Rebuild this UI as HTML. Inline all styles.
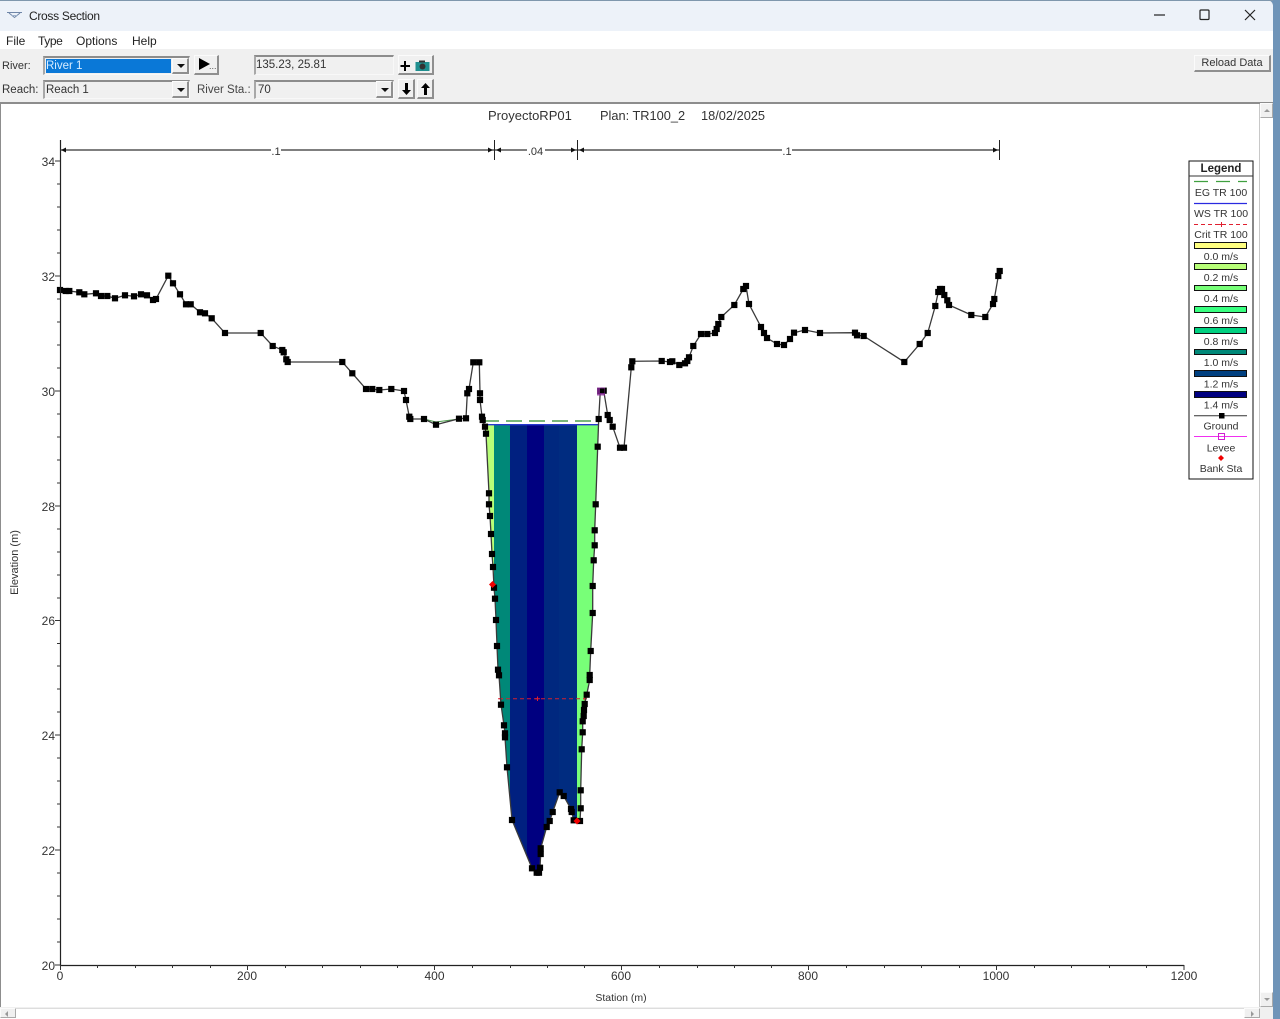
<!DOCTYPE html>
<html><head><meta charset="utf-8"><title>Cross Section</title>
<style>
html,body{margin:0;padding:0;background:#fff}
body{width:1280px;height:1019px;position:relative;overflow:hidden;font-family:"Liberation Sans",sans-serif;font-size:12px;color:#222}
.a{position:absolute;white-space:nowrap}
.box{position:absolute;box-sizing:border-box;border-top:2px solid #8c8c8c;border-left:2px solid #a8a8a8;border-right:1px solid #f8f8f8;border-bottom:1px solid #f8f8f8;background:#f0f0f0;line-height:17px;padding-left:1px;color:#333;font-size:11.5px}
.btn{position:absolute;box-sizing:border-box;background:#f0f0f0;border-top:1px solid #fbfbfb;border-left:1px solid #fbfbfb;border-right:2px solid #8f8f8f;border-bottom:2px solid #8f8f8f}
.tri{position:absolute;width:0;height:0;border-left:4px solid transparent;border-right:4px solid transparent;border-top:4px solid #111}
</style></head><body>
<div class="a" style="left:0;top:0;width:1280px;height:1019px;background:#6f94b8"></div>
<div class="a" style="left:0;top:0;width:1273px;height:1019px;background:#f0f0f0;border-radius:0 6px 6px 0"></div>
<div class="a" style="left:0;top:0;width:1273px;height:1px;background:#7f97ad"></div>
<div class="a" style="left:0;top:1px;width:1273px;height:30px;background:#edf2f9;border-radius:0 6px 0 0"></div>
<svg class="a" style="left:6px;top:10px" width="18" height="10"><path d="M1 2.500H16" stroke="#6f86a8" stroke-width="1"/><path d="M3 3L8.500 7.500L14 3" fill="none" stroke="#6f86a8" stroke-width="1"/><path d="M5 5.500H12" stroke="#9fb2cc"/></svg>
<div class="a" style="left:29px;top:9px;font-size:12px;letter-spacing:-.3px;color:#222">Cross Section</div>
<svg class="a" style="left:1150px;top:5px" width="112" height="20" fill="none" stroke="#222" stroke-width="1.200"><path d="M4 10H15"/><rect x="50" y="5" width="9" height="9.500" rx="1"/><path d="M95 5L105 15M105 5L95 15"/></svg>
<div class="a" style="left:0;top:31px;width:1273px;height:18px;background:#fff"></div>
<div class="a" style="left:6px;top:34px;color:#222">File</div>
<div class="a" style="left:38px;top:34px;color:#222;letter-spacing:-.4px">Type</div>
<div class="a" style="left:76px;top:34px;color:#222">Options</div>
<div class="a" style="left:132px;top:34px;color:#222">Help</div>

<div class="a" style="left:2px;top:60px;color:#333;font-size:11px">River:</div>
<div class="a" style="left:2px;top:84px;color:#333;font-size:11.500px">Reach:</div>
<div class="box" style="left:43px;top:56px;width:147px;height:19px"></div>
<div class="a" style="left:46px;top:59px;width:125px;height:14px;background:#0a78d7;color:#d8ecff;line-height:14px;font-size:11.500px">River 1</div>
<div class="btn" style="left:172px;top:58px;width:17px;height:16px"><div class="tri" style="left:4px;top:5px"></div></div>
<div class="box" style="left:43px;top:80px;width:147px;height:19px">Reach 1</div>
<div class="btn" style="left:172px;top:81px;width:17px;height:17px"><div class="tri" style="left:4px;top:6px"></div></div>
<div class="btn" style="left:194px;top:55px;width:25px;height:20px"><div class="a" style="left:4px;top:2px;width:0;height:0;border-left:11px solid #000;border-top:6px solid transparent;border-bottom:6px solid transparent"></div><div class="a" style="left:14px;top:5px;font-size:9px;color:#555">...</div></div>
<div class="box" style="left:254px;top:55px;width:140px;height:20px;line-height:17px;padding-left:0">135.23, 25.81</div>
<div class="a" style="left:197px;top:84px;color:#444;font-size:11.500px">River Sta.:</div>
<div class="box" style="left:254px;top:80px;width:140px;height:19px;padding-left:2px">70</div>
<div class="btn" style="left:376px;top:81px;width:17px;height:17px"><div class="tri" style="left:4px;top:6px"></div></div>
<div class="btn" style="left:398px;top:55px;width:36px;height:20px"><svg class="a" style="left:0;top:0" width="34" height="18"><path d="M6 5V15M1.500 10H11" stroke="#000" stroke-width="2"/><rect x="16.500" y="6" width="14" height="9" fill="#1f8f8f"/><rect x="20" y="4.500" width="6" height="2" fill="#333"/><circle cx="23.500" cy="10.500" r="3" fill="#333"/></svg></div>
<div class="btn" style="left:398px;top:79px;width:17px;height:20px"><svg class="a" style="left:0;top:0" width="15" height="18"><path d="M7.500 3V10" stroke="#000" stroke-width="3"/><path d="M3 10H12L7.500 15Z" fill="#000"/></svg></div>
<div class="btn" style="left:417px;top:79px;width:17px;height:20px"><svg class="a" style="left:0;top:0" width="15" height="18"><path d="M7.500 8V15" stroke="#000" stroke-width="3"/><path d="M3 8H12L7.500 3Z" fill="#000"/></svg></div>
<div class="btn" style="left:1194px;top:55px;width:77px;height:17px;text-align:center;line-height:14px;font-size:11px;color:#333">Reload Data</div>

<div class="a" style="left:0;top:102px;width:1260px;height:905px;background:#fff"></div>
<div class="a" style="left:0;top:102px;width:1273px;height:2px;background:#8d8d8d"></div>
<div class="a" style="left:0;top:102px;width:1px;height:905px;background:#8d8d8d"></div>
<div class="a" style="left:1259px;top:104px;width:1px;height:903px;background:#c8c8c8"></div>
<div class="a" style="left:1260px;top:104px;width:13px;height:903px;background:#fff"></div>
<div class="btn" style="left:1260px;top:103px;width:13px;height:15px;border-width:1px;border-right-color:#aaa;border-bottom-color:#aaa"><div class="a" style="left:3px;top:5px;border-left:3px solid transparent;border-right:3px solid transparent;border-bottom:3px solid #999"></div></div>
<div class="btn" style="left:1260px;top:992px;width:13px;height:15px;border-width:1px;border-right-color:#aaa;border-bottom-color:#aaa"><div class="a" style="left:3px;top:5px;border-left:3px solid transparent;border-right:3px solid transparent;border-top:3px solid #999"></div></div>
<div class="a" style="left:0;top:1007px;width:1273px;height:12px;background:#f0f0f0"></div>
<div class="a" style="left:0;top:1008px;width:1260px;height:10px;background:#fff;border-top:1px solid #ddd"></div>
<div class="btn" style="left:0;top:1008px;width:16px;height:10px;border-width:1px;border-right-color:#aaa;border-bottom-color:#aaa"><div class="a" style="left:4px;top:2px;border-top:3px solid transparent;border-bottom:3px solid transparent;border-right:3px solid #999"></div></div>
<div class="btn" style="left:1244px;top:1008px;width:16px;height:10px;border-width:1px;border-right-color:#aaa;border-bottom-color:#aaa"><div class="a" style="left:6px;top:2px;border-top:3px solid transparent;border-bottom:3px solid transparent;border-left:3px solid #999"></div></div>

<svg class="a" style="left:0;top:0" width="1280" height="1019" font-family="'Liberation Sans',sans-serif" font-size="12" fill="#333">
<defs>
<marker id="m" markerUnits="userSpaceOnUse" markerWidth="7" markerHeight="7" refX="3.500" refY="3.500"><rect width="6.200" height="6.200" x=".4" y=".4" fill="#000"/></marker>
<clipPath id="w"><path d="M484 424.700L486 433.700L489 493.300L489 504.300L490 516L491 534L492 554L493 567L494 587.700L495 598.700L496 620L497 646L498 669.700L499 675.300L501 704.700L504 725.300L505 737.300L507 767.300L512 820L532 868.300L536.700 872.700L539 872.700L540 867.700L540.700 848.300L546.700 827L549.700 821L552.700 812L559.700 792.300L563.700 796L571 809L573.700 820.300L580 821L580.700 790.300L581.700 749.300L582.700 721.300L584.700 704L586.700 694.700L589.700 675L590.700 651L592.700 613L592.700 586L593.700 560.300L594.700 530.300L595.700 504.300L597.700 446.700L598.700 424.700Z"/></clipPath>
</defs>
<g clip-path="url(#w)" shape-rendering="crispEdges">
<rect x="480" y="424" width="14" height="460" fill="#b8ff78"/>
<rect x="494" y="424" width="16" height="460" fill="#008878"/>
<rect x="510" y="424" width="17" height="460" fill="#002080"/>
<rect x="527" y="424" width="17" height="460" fill="#000080"/>
<rect x="544" y="424" width="15" height="460" fill="#00287f"/>
<rect x="559" y="424" width="18" height="460" fill="#002c80"/>
<rect x="577" y="424" width="24" height="460" fill="#78ff78"/>
</g>
<path d="M424 419L436 422L459 419" fill="none" stroke="#4f9f4f" stroke-width="1"/>
<path d="M483 421H598" stroke="#4f9f4f" stroke-width="1.500" stroke-dasharray="16 7" fill="none"/>
<path d="M485 424.700H598" stroke="#2838d0" stroke-width="1.300" fill="none"/>
<path d="M499 698.700H586" stroke="#d02030" stroke-width="1" stroke-dasharray="4 3" fill="none"/>
<path d="M500.500 696.500V701M498 698.700H503M537.500 696.500V701M535 698.700H540M585 696.500V701M583 698.700H587" stroke="#e02030" stroke-width="1" fill="none"/>

<polyline fill="none" stroke="#3a3a3a" stroke-width="1.300" marker-start="url(#m)" marker-mid="url(#m)" marker-end="url(#m)" points="60,290 65.700,291 69.300,291 79.300,292.300 84.300,294.300 96,293.300 101,296 107.300,296 115,298.300 125,295.300 134,296.300 141,294.300 147,295.300 153,300 156,299 168.300,275.700 173,283.300 180,294.300 186,304.300 190.700,304.300 200,312.300 205,313.300 211.700,318.300 225,333 260.700,333 272.700,346 282.300,350 283.700,352.300 286.300,359.300 287.700,362 342.300,362 352.300,373.300 366,389 372.300,389 379.300,390 391.300,389 404,391 406,400 409.300,416.700 410.300,419 424,419 436,424.700 459,418.700 466,418.300 467.300,393.300 469,389 473.300,362.300 479.300,362.300 480,393.300 480,400 482,416.700 482.700,420 485,426.700 486,433.700 489,493.300 489,504.300 490,516 491,534 492,554 493,567 494,587.700 495,598.700 496,620 497,646 498,669.700 499,675.300 501,704.700 504,725.300 505,733.300 505,737.300 507,767.300 512,820 532,868.300 536.700,872.700 539,872.700 540,867.700 540.700,854 540.700,848.300 546.700,827 549.700,821 552.700,812 559.700,792.300 563.700,796 571,809 571.700,812 573.700,820.300 580,821 580.700,808.300 580.700,790.300 581.700,749.300 582.700,732.300 582.700,721.300 583.700,716 584,710 584.700,704 586.700,694.700 589.700,680 589.700,675 590.700,651 592.700,613 592.700,586 593.700,560.300 594.700,545.300 594.700,530.300 595.700,504.300 597.700,446.700 598.700,419 600.300,391 603.700,390.700 607.700,415 609.700,420 612.700,426.700 620,447.700 624,447.700 631.300,367.300 632.300,361.300 661.700,361 670,362 672.300,361.300 679.300,365 685,363.300 687.300,361 689,357.300 693.300,346 701,334 707.300,334 715,333 716.700,329 718.300,324 721.300,317 734.300,305 743.300,289 746,286 749,304 761,327 764,333 767,338 777,344 784,345 790,339 794,332.700 805,330 820,333 855,332.700 857,335.300 863.700,336 904.300,362 919.700,344 927.700,333 935.300,306 938.300,292 940,289 942,289 944.300,295 947.300,300.300 949,305 971.300,315 985.300,317 993,304 994.300,299 998.300,276 999.700,271"/>
<rect x="597" y="387.500" width="8" height="8" fill="#8a2a9a" opacity=".8"/><rect x="600" y="388.500" width="4.500" height="4.500" fill="#000"/>
<path d="M492.500 581L496 584.500L492.500 588L489 584.500Z" fill="#f00000"/>
<path d="M577 817.500L580.500 821L577 824.500L573.500 821Z" fill="#f00000"/>

<path d="M60.500 140V965.500H1184" fill="none" stroke="#222" stroke-width="1.200"/>
<path d="M55 161H60M55 276H60M55 391H60M55 506H60M55 620.500H60M55 735H60M55 850H60M55 965H60M57 184H60M57 207H60M57 230H60M57 253H60M57 299H60M57 322H60M57 345H60M57 368H60M57 414H60M57 437H60M57 460H60M57 483H60M57 529H60M57 552H60M57 575H60M57 598H60M57 643.500H60M57 666H60M57 689H60M57 712H60M57 758H60M57 781H60M57 804H60M57 827H60M57 873H60M57 896H60M57 919H60M57 942H60" stroke="#333" stroke-width="1"/>
<path d="M60.500 965V970M247.500 965V970M434.500 965V970M621.500 965V970M808.500 965V970M996.500 965V970M1184 965V970M97.500 965V968M135.500 965V968M172.500 965V968M210.500 965V968M285.500 965V968M322.500 965V968M360.500 965V968M397.500 965V968M472.500 965V968M510.500 965V968M547.500 965V968M584.500 965V968M659.500 965V968M697.500 965V968M734.500 965V968M771.500 965V968M846.500 965V968M884.500 965V968M921.500 965V968M959.500 965V968M1034.500 965V968M1071.500 965V968M1109.500 965V968M1146.500 965V968" stroke="#333" stroke-width="1"/>

<path d="M60 150H271M281 150H494M494 150H527M545 150H577.500M577.500 150H782M792 150H999" stroke="#333" stroke-width="1.200" fill="none"/>
<path d="M494.500 140V160M577.500 140V160M999.500 140V160" stroke="#222" stroke-width="1"/>
<path d="M61 150L66 147.500V152.500ZM493 150L488 147.500V152.500ZM496 150L501 147.500V152.500ZM576 150L571 147.500V152.500ZM579 150L584 147.500V152.500ZM998 150L993 147.500V152.500Z" fill="#111"/>
<g font-size="11" text-anchor="middle"><text x="276" y="155">.1</text><text x="535.500" y="155">.04</text><text x="787" y="155">.1</text></g>

<g text-anchor="end" font-size="12"><text x="55" y="166">34</text><text x="55" y="281">32</text><text x="55" y="396">30</text><text x="55" y="511">28</text><text x="55" y="625">26</text><text x="55" y="740">24</text><text x="55" y="855">22</text><text x="55" y="970">20</text></g>
<g text-anchor="middle" font-size="12"><text x="60" y="980">0</text><text x="247" y="980">200</text><text x="434.500" y="980">400</text><text x="621" y="980">600</text><text x="808" y="980">800</text><text x="996" y="980">1000</text><text x="1184" y="980">1200</text></g>
<text x="621" y="1001" text-anchor="middle" font-size="10.500">Station (m)</text>
<text transform="translate(18,562.500) rotate(-90)" text-anchor="middle" font-size="11">Elevation (m)</text>
<text x="488" y="120" font-size="13">ProyectoRP01</text><text x="600" y="120" font-size="12.800">Plan: TR100_2</text><text x="701" y="120" font-size="12.800">18/02/2025</text>

<rect x="1189" y="161" width="64" height="318" fill="#fff" stroke="#111" stroke-width="1"/>
<path d="M1189 176H1253" stroke="#333"/>
<text x="1221" y="172" text-anchor="middle" font-weight="bold" font-size="11.500" fill="#222">Legend</text>
<path d="M1194 181.500H1247" stroke="#3fa03f" stroke-width="1.300" stroke-dasharray="14 8"/>
<path d="M1194 203.500H1247" stroke="#2a2ae0" stroke-width="1.300"/>
<path d="M1194 224.500H1247" stroke="#e02030" stroke-dasharray="4 3"/><path d="M1221.500 222V227M1218 224.500H1225" stroke="#e02030"/>
<g stroke="#111" stroke-width="1">
<rect x="1194.500" y="242.500" width="52" height="6" fill="#ffff80"/>
<rect x="1194.500" y="263.500" width="52" height="6" fill="#b8ff78"/>
<rect x="1194.500" y="285.500" width="52" height="5" fill="#78ff78"/>
<rect x="1194.500" y="306.500" width="52" height="6" fill="#38ff80"/>
<rect x="1194.500" y="327.500" width="52" height="6" fill="#00d080"/>
<rect x="1194.500" y="349.500" width="52" height="5" fill="#008878"/>
<rect x="1194.500" y="370.500" width="52" height="6" fill="#004080"/>
<rect x="1194.500" y="391.500" width="52" height="6" fill="#000080"/>
</g>
<path d="M1194 415.700H1247" stroke="#333"/><rect x="1219" y="413" width="5.500" height="5.500" fill="#000"/>
<path d="M1194 436.500H1247" stroke="#f030f0"/><rect x="1218.500" y="433.500" width="6" height="6" fill="none" stroke="#d020d0"/>
<path d="M1221 455L1224 458L1221 461L1218 458Z" fill="#f00000"/>
<g text-anchor="middle" font-size="10.500" fill="#333">
<text x="1221" y="196">EG TR 100</text><text x="1221" y="217">WS TR 100</text><text x="1221" y="238">Crit TR 100</text>
<text x="1221" y="260">0.0 m/s</text><text x="1221" y="281">0.2 m/s</text><text x="1221" y="302">0.4 m/s</text><text x="1221" y="324">0.6 m/s</text><text x="1221" y="345">0.8 m/s</text><text x="1221" y="366">1.0 m/s</text><text x="1221" y="387.500">1.2 m/s</text><text x="1221" y="408.500">1.4 m/s</text>
<text x="1221" y="429.500">Ground</text><text x="1221" y="451.500">Levee</text><text x="1221" y="472">Bank Sta</text>
</g>
</svg>
</body></html>
